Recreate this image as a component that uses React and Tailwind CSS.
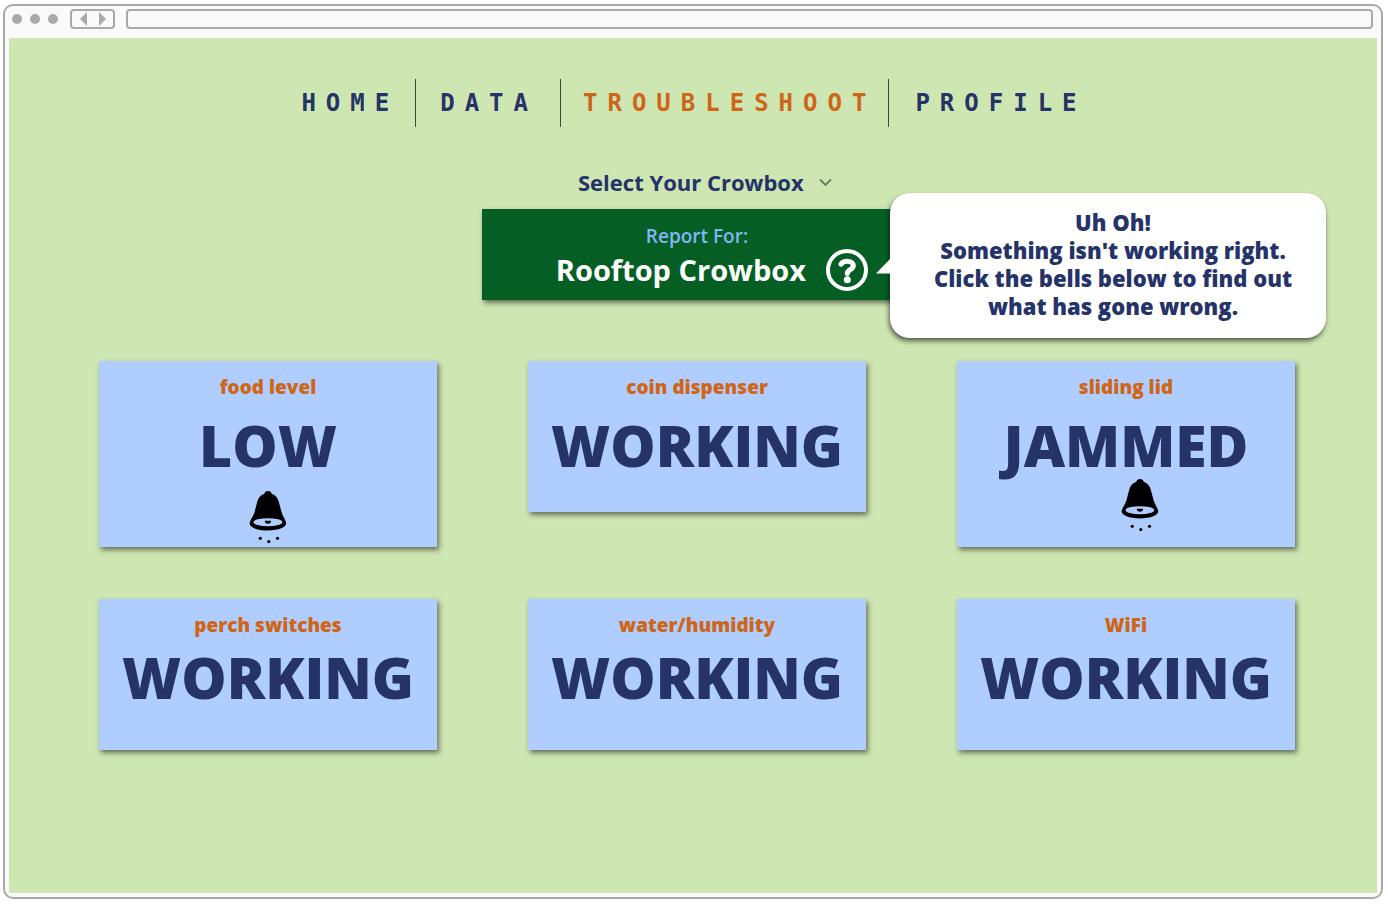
import React from "react";

const navItems = [
  { label: "HOME", pad: "pr-4" },
  { label: "DATA", pad: "pl-6 pr-[22px]" },
  { label: "TROUBLESHOOT", pad: "pl-[22px] pr-3", current: true },
  { label: "PROFILE", pad: "pl-[26px]" },
];

const cards = [
  { label: "food level", value: "LOW", gap: "mt-3", bell: "mt-3.5" },
  { label: "coin dispenser", value: "WORKING", gap: "mt-3" },
  { label: "sliding lid", value: "JAMMED", gap: "mt-3", bell: "mt-0.5 ml-7" },
  { label: "perch switches", value: "WORKING", gap: "mt-1.5" },
  { label: "water/humidity", value: "WORKING", gap: "mt-1.5" },
  { label: "WiFi", value: "WORKING", gap: "mt-1.5" },
];

function Bell() {
  return (
    <svg width="38" height="54" viewBox="0 0 38 54" aria-hidden="true">
      <path
        d="M19 0C17 0 15.6 1.2 15.3 2.7C11.6 4 9.2 6.8 8.3 10.6L5.4 21.500C4.600 24.600 1.600 28.400 .7 31.500C-.4 36 7.300 39.500 19 39.500S38.200 36 37.100 31.500C36.200 28.400 33.500 24.600 32.700 21.500L29.700 10.600C28.800 6.800 26.400 4 22.700 2.700C22.400 1.200 21 0 19 0Z"
        fill="#000"
      />
      <ellipse cx="18.900" cy="31.200" rx="14.400" ry="4" fill="#afceff" />
      <path d="M15.800 29.800h6.200c.2 1.600-.8 3-3.100 3s-3.300-1.400-3.100-3Z" fill="#000" />
      <circle cx="11.300" cy="47.300" r="1.600" />
      <circle cx="19.800" cy="50.600" r="1.600" />
      <circle cx="28.500" cy="47.300" r="1.600" />
    </svg>
  );
}

function BrowserBar() {
  return (
    <header className="flex h-8 items-start pt-[3px] pr-1">
      <div className="flex h-5 items-center gap-2 pl-[3px]">
        <span className="size-2.5 rounded-full bg-[#a9a9a9]" />
        <span className="size-2.5 rounded-full bg-[#a9a9a9]" />
        <span className="size-2.5 rounded-full bg-[#a9a9a9]" />
      </div>
      <div className="ml-3 flex h-5 w-[45px] items-center justify-center gap-3 rounded-sm border-2 border-[#a9a9a9]">
        <button type="button" aria-label="Back">
          <svg width="7" height="14" viewBox="0 0 7 14" fill="#a9a9a9">
            <path d="M7 0V14L0 7Z" />
          </svg>
        </button>
        <button type="button" aria-label="Forward">
          <svg width="7" height="14" viewBox="0 0 7 14" fill="#a9a9a9">
            <path d="M0 0V14L7 7Z" />
          </svg>
        </button>
      </div>
      <input
        type="text"
        aria-label="Address"
        className="ml-[11px] h-5 min-w-0 flex-1 rounded-sm border-2 border-[#a9a9a9] bg-[#fafafa] px-2 text-xs outline-none"
      />
    </header>
  );
}

export default function App() {
  return (
    <div className="flex min-h-screen bg-white pt-1 pr-[5px] pb-2 pl-[3px] font-['Open_Sans','Noto_Sans',sans-serif] text-[#253369]">
      <div className="flex flex-1 flex-col rounded-[10px] border-2 border-[#a9a9a9] bg-[#fafafa] px-1 pb-1">
        <BrowserBar />
        <main className="flex-1 bg-[#cee6b2] pt-[41px] pb-16">
          <nav className="flex justify-center pl-0.5 font-['DejaVu_Sans_Mono',monospace] text-2xl font-bold tracking-[10px]">
            {navItems.map((item, i) => (
              <a
                key={item.label}
                href="#"
                aria-current={item.current ? "page" : undefined}
                className={`flex h-12 items-center ${item.pad} ${i > 0 ? "border-l border-[#3d4a35]" : ""} ${item.current ? "text-[#cf6516]" : ""}`}
              >
                {item.label}
              </a>
            ))}
          </nav>

          <div className="mt-[39px] flex justify-center pl-6">
            <div className="grid items-center">
              <select
                aria-label="Crowbox"
                className="col-start-1 row-start-1 h-8 appearance-none bg-transparent pr-7 text-[22px] font-bold outline-none"
              >
                <option>Select Your Crowbox</option>
              </select>
              <svg
                className="pointer-events-none col-start-1 row-start-1 justify-self-end"
                width="13"
                height="9"
                viewBox="0 0 13 9"
                fill="none"
                stroke="#6b7669"
                strokeWidth="1.800"
              >
                <path d="M1 1.500L6.500 7L12 1.500" />
              </svg>
            </div>
          </div>

          <section className="relative mx-auto mt-[11px] h-[91px] w-[422px] bg-[#055f24] pt-[13px] shadow-[2px_3px_5px_rgba(0,0,0,0.5)]">
            <p className="pl-2 text-center text-[19px] leading-7 font-semibold text-[#80b6f5]">Report For:</p>
            <div className="-mt-0.5 flex items-center justify-end gap-5 pr-9">
              <h1 className="text-[29px] leading-[44px] font-bold text-white">Rooftop Crowbox</h1>
              <button type="button" aria-label="Help">
                <svg width="42" height="42" viewBox="0 0 42 42" fill="none" stroke="#fff">
                  <circle cx="21" cy="21" r="19" strokeWidth="4" />
                  <path
                    d="M15 15.200C16.200 13.300 18.300 12.300 21.200 12.300C24.800 12.300 27.300 14 27.300 16.700C27.300 20.700 21.300 20.700 21.300 24.500"
                    strokeWidth="5"
                    strokeLinecap="round"
                  />
                  <circle cx="21.300" cy="30.700" r="3.500" fill="#fff" stroke="none" />
                </svg>
              </button>
            </div>
            <div className="absolute -top-4 left-[408px] flex h-[145px] w-[436px] justify-center rounded-[20px] bg-white pt-[15px] shadow-[-1px_3px_5px_rgba(0,0,0,0.6)]">
              <svg className="absolute top-16 -left-3.5" width="16" height="17" viewBox="0 0 16 17" fill="#fff">
                <path d="M0 16.500L16 0V16.500Z" />
              </svg>
              <p className="pl-2.5 text-center text-[22px] leading-7 font-extrabold">
                Uh Oh!
                <br />
                Something isn't working right.
                <br />
                Click the bells below to find out
                <br />
                what has gone wrong.
              </p>
            </div>
          </section>

          <section className="mt-[61px] grid grid-cols-3 items-start gap-x-[91px] gap-y-[52px] pr-[82px] pl-[90px]">
            {cards.map((card) => (
              <article
                key={card.label}
                className={`flex flex-col items-center bg-[#afceff] pt-3 shadow-[2px_3px_5px_rgba(0,0,0,0.5)] ${card.bell ? "min-h-[186px]" : "min-h-[151px]"}`}
              >
                <h2 className="text-[19px] leading-7 font-extrabold text-[#cf6516]">{card.label}</h2>
                <p className={`text-[57px] leading-[64px] font-extrabold ${card.gap}`}>{card.value}</p>
                {card.bell && (
                  <button type="button" aria-label={`Show the ${card.label} problem`} className={card.bell}>
                    <Bell />
                  </button>
                )}
              </article>
            ))}
          </section>
        </main>
      </div>
    </div>
  );
}
